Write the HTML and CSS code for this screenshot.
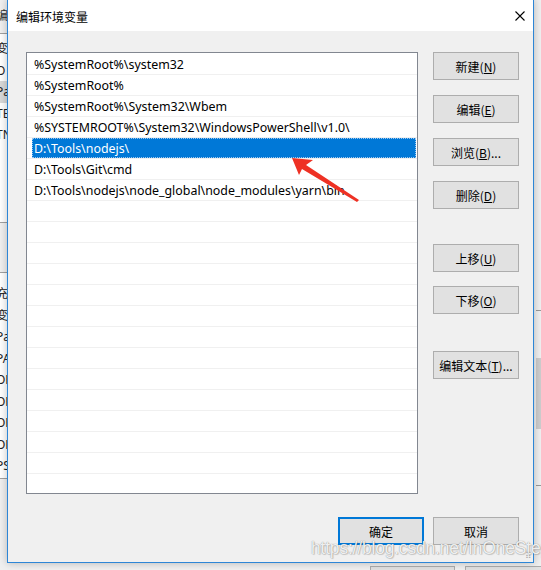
FILE: index.html
```html
<!DOCTYPE html>
<html>
<head>
<meta charset="utf-8">
<link rel="stylesheet" href="styles.css">
</head>
<body>
<div class="screen">
  <div class="backwin">
    <div class="bw-title">编</div>
    <div class="bw-panel bw-panel1">
      <div class="bw-row">变</div>
      <div class="bw-row">O</div>
      <div class="bw-row bw-sel">Pa</div>
      <div class="bw-row">TE</div>
      <div class="bw-row">TN</div>
    </div>
    <div class="bw-panel bw-panel2">
      <div class="bw-row">充</div>
      <div class="bw-row">变</div>
      <div class="bw-row">Pa</div>
      <div class="bw-row">PA</div>
      <div class="bw-row">OF</div>
      <div class="bw-row">OF</div>
      <div class="bw-row">OF</div>
      <div class="bw-row">OF</div>
      <div class="bw-row">PS</div>
    </div>
    <div class="bw-scroll"><div class="bw-thumb"></div></div>
    <div class="bw-btn bw-btn1"></div>
    <div class="bw-btn bw-btn2"></div>
  </div>

  <div class="dialog">
    <div class="titlebar">
      <span class="title">编辑环境变量</span>
      <svg class="close" width="10" height="10" viewBox="0 0 10 10"><path d="M0.5 0.5L9.5 9.5M9.5 0.5L0.5 9.5" stroke="#000" stroke-width="1.1" fill="none"/></svg>
    </div>
    <div class="content">
      <div class="main">
        <div class="list">
          <div class="row"><span class="item">%SystemRoot%\system32</span></div>
          <div class="row"><span class="item">%SystemRoot%</span></div>
          <div class="row"><span class="item">%SystemRoot%\System32\Wbem</span></div>
          <div class="row"><span class="item">%SYSTEMROOT%\System32\WindowsPowerShell\v1.0\</span></div>
          <div class="row"><span class="item selected">D:\Tools\nodejs\</span></div>
          <div class="row"><span class="item">D:\Tools\Git\cmd</span></div>
          <div class="row"><span class="item">D:\Tools\nodejs\node_global\node_modules\yarn\bin</span></div>
          <div class="row"></div><div class="row"></div><div class="row"></div>
          <div class="row"></div><div class="row"></div><div class="row"></div>
          <div class="row"></div><div class="row"></div><div class="row"></div>
          <div class="row"></div><div class="row"></div><div class="row"></div>
          <div class="row"></div><div class="row"></div>
        </div>
        <div class="side">
          <button class="btn">新建(<u>N</u>)</button>
          <button class="btn">编辑(<u>E</u>)</button>
          <button class="btn">浏览(<u>B</u>)...</button>
          <button class="btn">删除(<u>D</u>)</button>
          <button class="btn btn-up">上移(<u>U</u>)</button>
          <button class="btn btn-down">下移(<u>O</u>)</button>
          <button class="btn btn-text">编辑文本(<u>T</u>)...</button>
        </div>
      </div>
      <div class="footer">
        <button class="btn btn-default">确定</button>
        <button class="btn">取消</button>
      </div>
    </div>
  </div>

  <svg class="arrow" width="541" height="570" viewBox="0 0 541 570">
    <polygon points="292,158 313,160 306,165 359,200 357,202 302,169 299,175" fill="#ee3124"/>
  </svg>

  <div class="watermark">https://blog.csdn.net/InOneStep</div>
  <div class="grip">⠿</div>
</div>
</body>
</html>
```
FILE: styles.css
```css
* { box-sizing: border-box; }
html, body { margin: 0; padding: 0; }
body {
  width: 541px;
  height: 570px;
  overflow: hidden;
  background: #f0f0f0;
  font-family: "Noto Sans", "Noto Sans CJK SC", sans-serif;
  font-size: 12px;
  color: #000;
}
.screen {
  position: relative;
  width: 541px;
  height: 570px;
  overflow: hidden;
}

/* background window */
.backwin {
  position: absolute;
  inset: 0;
  background: #f0f0f0;
}
.bw-title {
  position: absolute;
  left: -4px;
  top: 6px;
  font-size: 12px;
  color: #333;
}
.bw-panel {
  position: absolute;
  left: -6px;
  width: 20px;
  background: #fff;
  border-top: 1px solid #a0a0a0;
  border-bottom: 1px solid #a0a0a0;
  display: flex;
  flex-direction: column;
}
.bw-panel1 { top: 33px; height: 190px; padding-top: 4px; }
.bw-panel2 { top: 272px; height: 207px; padding-top: 10px; }
.bw-row {
  height: 21.5px;
  line-height: 21px;
  font-size: 12px;
  color: #222;
  padding-left: 2px;
}
.bw-sel { background: #d9d9d9; }
.bw-scroll {
  position: absolute;
  left: 536px;
  top: 310px;
  width: 5px;
  height: 176px;
  border-top: 1px solid #999;
  border-bottom: 1px solid #999;
  background: #f0f0f0;
}
.bw-thumb {
  margin-top: 47px;
  height: 71px;
  background: #cdcdcd;
}
.bw-btn {
  position: absolute;
  top: 566px;
  height: 20px;
  background: #e1e1e1;
  border: 1px solid #adadad;
}
.bw-btn1 { left: 370px; width: 85px; }
.bw-btn2 { left: 465px; width: 85px; }

/* dialog */
.dialog {
  position: absolute;
  left: 7px;
  top: -1px;
  width: 527px;
  height: 564px;
  border: 1px solid #2d86d6;
  background: #f0f0f0;
  display: flex;
  flex-direction: column;
  box-shadow: 0 0 8px rgba(0, 0, 0, 0.25);
}
.titlebar {
  height: 31px;
  background: #fff;
  display: flex;
  align-items: center;
  justify-content: space-between;
  padding: 1px 8px 0 8px;
  flex: none;
}
.title {
  font-family: "Noto Sans CJK SC", sans-serif;
  font-size: 12px;
  letter-spacing: 0;
}
.content {
  flex: 1;
  display: flex;
  flex-direction: column;
  padding: 21px 14px 0 18px;
}
.main {
  display: flex;
  gap: 15px;
}
.list {
  width: 392px;
  height: 442px;
  background: #fff;
  border: 1px solid #828790;
  overflow: hidden;
  display: flex;
  flex-direction: column;
}
.row {
  height: 21px;
  flex: none;
  border-bottom: 1px solid #f0f0f0;
  display: flex;
  align-items: stretch;
  padding: 0 1px 0 5px;
}
.row:first-child { height: 22px; padding-top: 1px; }
.item {
  display: flex;
  align-items: center;
  padding-left: 2px;
  flex: 1;
  white-space: nowrap;
  font-size: 12.4px;
}
.selected {
  background: #0078d7;
  color: #fff;
  outline: 1px dotted #9cc7f0;
  outline-offset: -1px;
}
.side {
  display: flex;
  flex-direction: column;
  gap: 15px;
  padding-top: 0;
}
.btn {
  width: 86px;
  height: 28px;
  background: #e1e1e1;
  border: 1px solid #adadad;
  font-family: "Noto Sans CJK SC", sans-serif;
  font-size: 12px;
  color: #000;
  padding: 0;
  margin: 0;
  display: flex;
  align-items: center;
  justify-content: center;
}
.btn u { text-underline-offset: 1px; }
.btn-up { margin-top: 20px; }
.btn-down { margin-top: -1px; }
.btn-text { margin-top: 22px; }
.footer {
  display: flex;
  justify-content: flex-end;
  gap: 9px;
  margin-top: 23px;
}
.btn-default { border: 2px solid #0078d7; }

.arrow {
  position: absolute;
  left: 0;
  top: 0;
}
.watermark {
  position: absolute;
  left: 311px;
  top: 538px;
  font-family: "Liberation Sans", sans-serif;
  font-size: 17.5px;
  letter-spacing: -0.2px;
  color: rgba(255, 255, 255, 0.9);
  text-shadow: 0 0 1px rgba(90, 90, 90, 0.8), 1px 1px 1px rgba(0, 0, 0, 0.15);
  white-space: nowrap;
}
.grip {
  position: absolute;
  left: 525px;
  top: 549px;
  font-size: 9px;
  color: #aaa;
}
```
